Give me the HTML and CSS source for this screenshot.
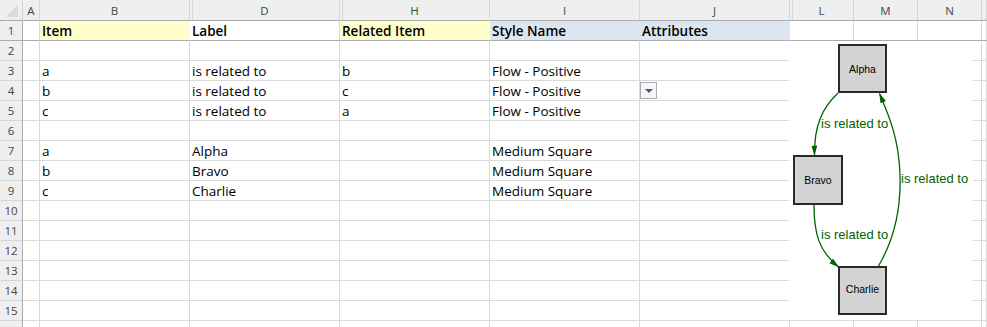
FILE: index.html
```html
<!DOCTYPE html>
<html lang="en">

<head>
  <meta charset="UTF-8">
  <title>Relationships</title>
  <link rel="stylesheet" href="styles.css">
</head>

<body>
  <div class="sheet">
    <div class="row head">
      <div class="c hd corner"><span class="tri"></span></div>
      <div class="c hd">A</div>
      <div class="c hd">B</div>
      <div class="c hd gap">D</div>
      <div class="c hd gap">H</div>
      <div class="c hd">I</div>
      <div class="c hd">J</div>
      <div class="c hd gap">L</div>
      <div class="c hd">M</div>
      <div class="c hd">N</div>
      <div class="c hd"></div>
    </div>
    <div class="row frozen">
      <div class="c rn">1</div>
      <div class="c"></div>
      <div class="c b yel">Item</div>
      <div class="c b">Label</div>
      <div class="c b yel">Related Item</div>
      <div class="c b blu">Style Name</div>
      <div class="c b blu">Attributes</div>
      <div class="c"></div>
      <div class="c"></div>
      <div class="c"></div>
      <div class="c"></div>
    </div>
    <div class="row">
      <div class="c rn">2</div>
      <div class="c"></div><div class="c"></div><div class="c"></div><div class="c"></div><div class="c"></div>
      <div class="c"></div><div class="c"></div><div class="c"></div><div class="c"></div><div class="c"></div>
    </div>
    <div class="row">
      <div class="c rn">3</div>
      <div class="c"></div>
      <div class="c">a</div>
      <div class="c">is related to</div>
      <div class="c">b</div>
      <div class="c">Flow - Positive</div>
      <div class="c"></div><div class="c"></div><div class="c"></div><div class="c"></div><div class="c"></div>
    </div>
    <div class="row">
      <div class="c rn">4</div>
      <div class="c"></div>
      <div class="c">b</div>
      <div class="c">is related to</div>
      <div class="c">c</div>
      <div class="c">Flow - Positive</div>
      <div class="c dd-host"><span class="dd"><span class="arrow"></span></span></div>
      <div class="c"></div><div class="c"></div><div class="c"></div><div class="c"></div>
    </div>
    <div class="row">
      <div class="c rn">5</div>
      <div class="c"></div>
      <div class="c">c</div>
      <div class="c">is related to</div>
      <div class="c">a</div>
      <div class="c">Flow - Positive</div>
      <div class="c"></div><div class="c"></div><div class="c"></div><div class="c"></div><div class="c"></div>
    </div>
    <div class="row">
      <div class="c rn">6</div>
      <div class="c"></div><div class="c"></div><div class="c"></div><div class="c"></div><div class="c"></div>
      <div class="c"></div><div class="c"></div><div class="c"></div><div class="c"></div><div class="c"></div>
    </div>
    <div class="row">
      <div class="c rn">7</div>
      <div class="c"></div>
      <div class="c">a</div>
      <div class="c">Alpha</div>
      <div class="c"></div>
      <div class="c">Medium Square</div>
      <div class="c"></div><div class="c"></div><div class="c"></div><div class="c"></div><div class="c"></div>
    </div>
    <div class="row">
      <div class="c rn">8</div>
      <div class="c"></div>
      <div class="c">b</div>
      <div class="c">Bravo</div>
      <div class="c"></div>
      <div class="c">Medium Square</div>
      <div class="c"></div><div class="c"></div><div class="c"></div><div class="c"></div><div class="c"></div>
    </div>
    <div class="row">
      <div class="c rn">9</div>
      <div class="c"></div>
      <div class="c">c</div>
      <div class="c">Charlie</div>
      <div class="c"></div>
      <div class="c">Medium Square</div>
      <div class="c"></div><div class="c"></div><div class="c"></div><div class="c"></div><div class="c"></div>
    </div>
    <div class="row">
      <div class="c rn">10</div>
      <div class="c"></div><div class="c"></div><div class="c"></div><div class="c"></div><div class="c"></div>
      <div class="c"></div><div class="c"></div><div class="c"></div><div class="c"></div><div class="c"></div>
    </div>
    <div class="row">
      <div class="c rn">11</div>
      <div class="c"></div><div class="c"></div><div class="c"></div><div class="c"></div><div class="c"></div>
      <div class="c"></div><div class="c"></div><div class="c"></div><div class="c"></div><div class="c"></div>
    </div>
    <div class="row">
      <div class="c rn">12</div>
      <div class="c"></div><div class="c"></div><div class="c"></div><div class="c"></div><div class="c"></div>
      <div class="c"></div><div class="c"></div><div class="c"></div><div class="c"></div><div class="c"></div>
    </div>
    <div class="row">
      <div class="c rn">13</div>
      <div class="c"></div><div class="c"></div><div class="c"></div><div class="c"></div><div class="c"></div>
      <div class="c"></div><div class="c"></div><div class="c"></div><div class="c"></div><div class="c"></div>
    </div>
    <div class="row">
      <div class="c rn">14</div>
      <div class="c"></div><div class="c"></div><div class="c"></div><div class="c"></div><div class="c"></div>
      <div class="c"></div><div class="c"></div><div class="c"></div><div class="c"></div><div class="c"></div>
    </div>
    <div class="row">
      <div class="c rn">15</div>
      <div class="c"></div><div class="c"></div><div class="c"></div><div class="c"></div><div class="c"></div>
      <div class="c"></div><div class="c"></div><div class="c"></div><div class="c"></div><div class="c"></div>
    </div>
    <div class="row">
      <div class="c rn"></div>
      <div class="c"></div><div class="c"></div><div class="c"></div><div class="c"></div><div class="c"></div>
      <div class="c"></div><div class="c"></div><div class="c"></div><div class="c"></div><div class="c"></div>
    </div>

    <!-- diagram picture floating over columns L:N -->
    <svg class="pic" width="184" height="279" viewBox="789 41 184 279">
      <defs>
        <marker id="head" markerUnits="userSpaceOnUse" markerWidth="10" markerHeight="7" refX="9.5" refY="3" orient="auto">
          <path d="M0,0 L10,3 L0,6 z" fill="#006400"/>
        </marker>
      </defs>
      <rect x="789" y="41" width="184" height="279" fill="#fff"/>

      <path class="edge" d="M838,93 C823,107 814,125 814.5,155" marker-end="url(#head)"/>
      <path class="edge" d="M814,205 C814,234 819,251 838.5,267" marker-end="url(#head)"/>
      <path class="edge" d="M878.5,266 C895,238 901,205 900,175 C899,140 890,118 879.5,93.5" marker-end="url(#head)"/>

      <text class="lbl" x="821" y="127.5">is related to</text>
      <text class="lbl" x="821" y="238.5">is related to</text>
      <text class="lbl" x="901" y="182.5">is related to</text>

      <rect class="node" x="839" y="45" width="47" height="47"/>
      <text class="name" x="862.5" y="72.5">Alpha</text>
      <rect class="node" x="794" y="156" width="48" height="48"/>
      <text class="name" x="818" y="183.5">Bravo</text>
      <rect class="node" x="839" y="267" width="47" height="47"/>
      <text class="name" x="862.5" y="293">Charlie</text>
    </svg>
  </div>
</body>

</html>
```

FILE: styles.css
```css
* {
  box-sizing: border-box;
}

body {
  margin: 0;
  overflow: hidden;
  background-color: #fff;
  font-family: "Open Sans", "Noto Sans", sans-serif;
}

.sheet {
  position: relative;
  width: 987px;
  height: 327px;
  overflow: hidden;
}

.row {
  display: grid;
  grid-template-columns: 23px 17px 150px 150px 150px 150px 150px 64px 64px 64px 1fr;
  height: 20px;
}

.row.head {
  height: 21px;
}

.c {
  border-right: 1px solid #dadada;
  border-bottom: 1px solid #dadada;
  padding: 1px 0 0 2px;
  font-size: 13.5px;
  line-height: 18px;
  color: #000;
  white-space: nowrap;
  overflow: hidden;
}

/* column letters */
.hd {
  background-color: #efefef;
  border-bottom-color: #ababab;
  border-right-color: #d6d6d6;
  padding: 1px 0 0 0;
  font-size: 11.5px;
  line-height: 19px;
  color: #444;
  text-align: center;
}

/* hidden column marker */
.hd.gap {
  background-image: linear-gradient(to right, transparent 2px, #d6d6d6 2px, #d6d6d6 3px, transparent 3px);
}

.corner {
  display: flex;
  justify-content: flex-end;
  align-items: flex-end;
  padding: 0 4px 3px 0;
}

.tri {
  width: 12px;
  height: 12px;
  background-image: linear-gradient(to bottom right, transparent 50%, #dcdcdc 50%);
}

/* row numbers */
.rn {
  background-color: #efefef;
  border-right-color: #ababab;
  border-bottom-color: #d6d6d6;
  padding: 0;
  font-size: 11.5px;
  line-height: 20px;
  color: #444;
  text-align: center;
}

/* freeze pane line under row 1 */
.frozen .c {
  border-bottom-color: #ababab;
}

.b {
  font-weight: 600;
}

.yel {
  background-color: #ffffcc;
  border-right-color: transparent;
}

.blu {
  background-color: #dce6f1;
  border-right-color: transparent;
}

.dd-host {
  padding: 1px 0 0 0;
}

.dd {
  display: flex;
  align-items: center;
  justify-content: center;
  width: 17px;
  height: 17px;
  border: 1px solid #a6afb9;
  background-color: #f6f6f6;
}

.arrow {
  width: 0;
  height: 0;
  border-left: 4px solid transparent;
  border-right: 4px solid transparent;
  border-top: 4px solid #5a5a5a;
}

.pic {
  position: absolute;
  left: 789px;
  top: 41px;
}

.edge {
  fill: none;
  stroke: #006400;
  stroke-width: 1.3;
}

.lbl {
  font-family: "Liberation Sans", Arial, sans-serif;
  font-size: 13px;
  fill: #006400;
}

.node {
  fill: #d3d3d3;
  stroke: #2a2a2a;
  stroke-width: 2;
}

.name {
  font-family: "Liberation Sans", Arial, sans-serif;
  font-size: 10.5px;
  fill: #000;
  text-anchor: middle;
}
```
